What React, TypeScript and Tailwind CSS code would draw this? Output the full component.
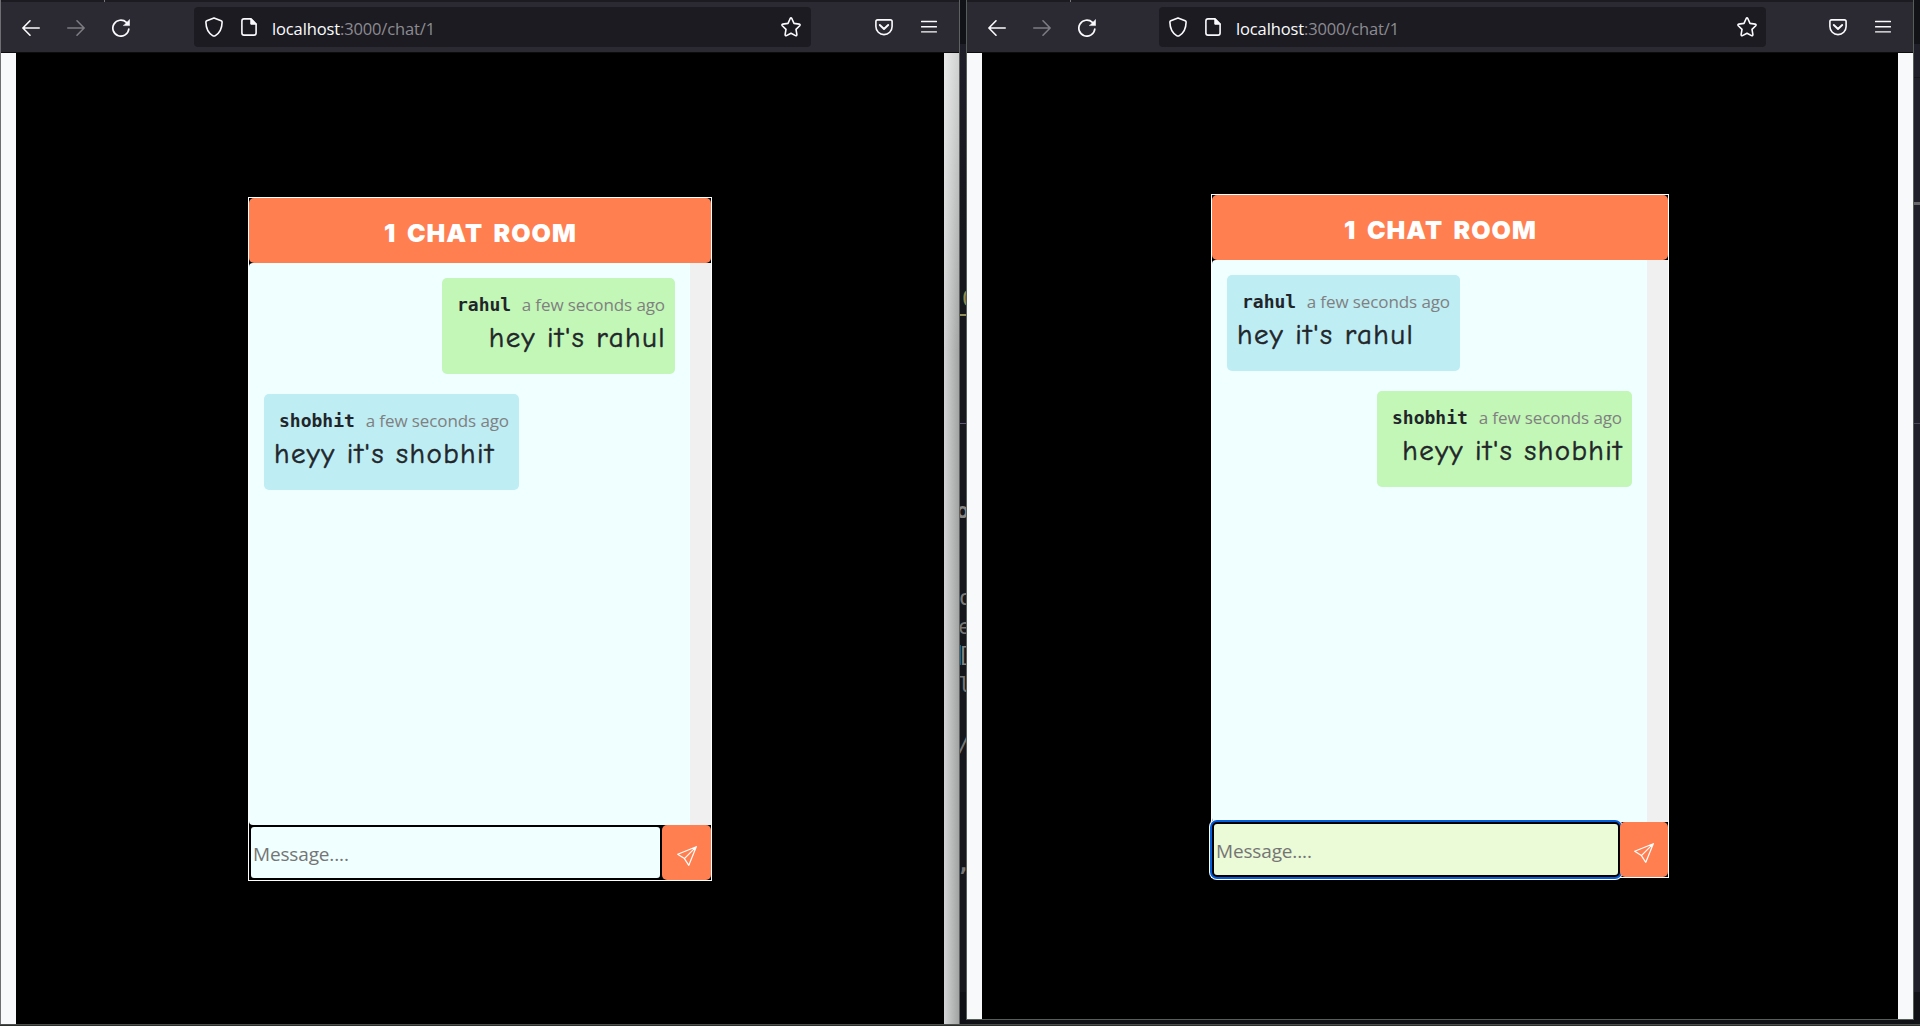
import React from "react";

type Message = { user: string; text: string; bubble: string };

const RAHUL: Message = { user: "rahul", text: "hey it's rahul", bubble: "w-[233px]" };
const SHOBHIT: Message = { user: "shobhit", text: "heyy it's shobhit", bubble: "w-[255px]" };

const svgProps = {
  fill: "none",
  stroke: "currentColor",
  strokeLinecap: "round" as const,
  strokeLinejoin: "round" as const,
};

function BackIcon() {
  return (
    <svg {...svgProps} width="18" height="18" viewBox="0 0 18 18" strokeWidth="1.6" className="shrink-0">
      <path d="M17.2 9H1M8 1.8L.9 9L8 16.2" />
    </svg>
  );
}

function ForwardIcon() {
  return (
    <svg {...svgProps} width="18" height="18" viewBox="0 0 18 18" strokeWidth="1.6" className="shrink-0">
      <path d="M.8 9H17M10 1.8L17.1 9L10 16.2" />
    </svg>
  );
}

function ReloadIcon() {
  return (
    <svg {...svgProps} width="18" height="18" viewBox="0 0 18 18" strokeWidth="1.7" className="shrink-0">
      <path d="M16.8 10A8 8 0 1 1 14.4 3.4" />
      <path d="M17.6 .8V6.6H11.6Z" fill="currentColor" strokeWidth=".5" />
    </svg>
  );
}

function ShieldIcon() {
  return (
    <svg {...svgProps} width="18" height="20" viewBox="0 0 18 20" strokeWidth="1.6" className="shrink-0">
      <path d="M9 .9L16.2 3.7Q17.2 4.1 17.1 5.2C17 10.6 15.4 15.4 10.4 18.6Q9 19.5 7.6 18.6C2.6 15.4 1 10.6 .9 5.2Q.8 4.1 1.8 3.7Z" />
    </svg>
  );
}

function PageIcon() {
  return (
    <svg {...svgProps} width="16" height="18" viewBox="0 0 16 18" strokeWidth="1.6" className="shrink-0">
      <path d="M10 .9H3Q.9 .9 .9 3V15Q.9 17.1 3 17.1H13Q15.1 17.1 15.1 15V6Z" />
      <path d="M9.8 1V6.2H15Z" fill="currentColor" strokeWidth="1" />
    </svg>
  );
}

function StarIcon() {
  return (
    <svg {...svgProps} width="20" height="20" viewBox="0 0 20 20" strokeWidth="1.6" className="shrink-0">
      <path d="M9.2 1.5Q10 .2 10.8 1.5L13 6.4L18.2 7.1Q19.7 7.5 18.7 8.7L15 12.4L15.9 17.6Q15.9 19.2 14.5 18.6L10 16.2L5.5 18.6Q4.1 19.2 4.1 17.6L5 12.4L1.3 8.7Q.3 7.5 1.8 7.1L7 6.4Z" />
    </svg>
  );
}

function PocketIcon() {
  return (
    <svg {...svgProps} width="18" height="17" viewBox="0 0 18 17" strokeWidth="1.6" className="shrink-0">
      <path d="M2.6 .9H15.4Q17.1 .9 17.1 2.6V7.5A8.1 8.1 0 0 1 .9 7.5V2.6Q.9 .9 2.6 .9Z" />
      <path d="M4.8 6L9 10L13.2 6" strokeWidth="1.9" />
    </svg>
  );
}

function MenuIcon() {
  return (
    <svg {...svgProps} width="16" height="14" viewBox="0 0 16 14" strokeWidth="1.4" className="shrink-0">
      <path d="M.6 1.5H15.4M.6 6.7H15.4M.6 11.9H15.4" />
    </svg>
  );
}

function SendIcon() {
  return (
    <svg {...svgProps} width="20" height="20" viewBox="0 0 20 20" strokeWidth="1.2">
      <path d="M19.3 .7L11.8 19.3L7.4 12.6L.7 8.2ZM19.3 .7L7.4 12.6" />
    </svg>
  );
}

function Toolbar({ urlClass, iconPad }: { urlClass: string; iconPad: string }) {
  return (
    <div className="flex h-[53px] shrink-0 flex-col bg-[#0c0c0d] text-[#fbfbfe]">
      <div className="flex h-[2px] bg-[#1c1b22]">
        <div className="ml-[103px] w-px bg-[#77767c]" />
      </div>
      <div className="flex h-[50px] items-center bg-[#2b2a33]">
        <div className="ml-[21px] flex gap-[27px] pt-px">
          <BackIcon />
          <span className="text-[#7d7c82]"><ForwardIcon /></span>
          <ReloadIcon />
        </div>
        <div className={`flex h-10 items-center rounded bg-[#1c1b22] ${urlClass} ${iconPad}`}>
          <ShieldIcon />
          <span className="ml-[18px]"><PageIcon /></span>
          <span className="ml-[14px] pt-[3px] pl-px font-['Open_Sans',sans-serif] text-[16.5px] leading-6 tracking-[-0.13px] whitespace-nowrap">
            localhost<span className="text-[#8c8b91]">:3000/chat/1</span>
          </span>
          <span className="ml-auto"><StarIcon /></span>
        </div>
        <div className="mr-[22px] ml-auto flex items-center gap-7">
          <PocketIcon />
          <MenuIcon />
        </div>
      </div>
    </div>
  );
}

function Bubble({ message, mine }: { message: Message; mine: boolean }) {
  return (
    <div
      className={`flex h-24 flex-col rounded-[5px] px-[10px] pt-3 whitespace-nowrap ${message.bubble} ${
        mine ? "items-end self-end bg-[#c3f7b7]" : "items-start self-start bg-[#beedf4]"
      }`}
    >
      <div className="flex h-[30px] w-full items-center justify-between pl-[5px]">
        <span className="font-['DejaVu_Sans_Mono',monospace] text-[18px] leading-[30px] font-bold">{message.user}</span>
        <span className="font-['Open_Sans',sans-serif] text-[17px] leading-[30px] tracking-[-0.1px] text-[#808080]">
          a few seconds ago
        </span>
      </div>
      <p className={`font-['Comic_Sans_MS','Comic_Neue','DejaVu_Sans',sans-serif] text-[29px] leading-9 tracking-[1.4px] text-[#212529] [-webkit-text-stroke:0.5px_#212529] ${mine ? "-mr-px" : ""}`}>
        {message.text}
      </p>
    </div>
  );
}

function ChatRoom({ me, focused, size }: { me: string; focused: boolean; size: string }) {
  return (
    <div className={`flex h-[684px] flex-col border border-white bg-black ${size}`}>
      <div className="flex h-[65px] shrink-0 items-center justify-center rounded-[5px] bg-[#ff7f50]">
        <h1 className="pt-[5px] pl-px font-['Inter',sans-serif] text-[25px] leading-8 font-black tracking-[1px] whitespace-nowrap text-white [word-spacing:4.5px]">
          1 CHAT ROOM
        </h1>
      </div>
      <div className="flex h-[562px] shrink-0">
        <div className="flex flex-1 flex-col gap-5 rounded-l-[4px] bg-[#f0ffff] p-[15px] text-[#212529]">
          <Bubble message={RAHUL} mine={me === "rahul"} />
          <Bubble message={SHOBHIT} mine={me === "shobhit"} />
        </div>
        <div className="w-[21px] bg-[#f0f0f0]" />
      </div>
      <div className="flex h-[55px]">
        <div
          className={`flex flex-1 items-center rounded-[5px] border-2 border-black pl-[2px] ${
            focused
              ? "bg-[#ebfad7] shadow-[0_0_0_2px_#0060df,0_0_0_3px_#ffffff]"
              : "bg-[#f0ffff]"
          }`}
        >
          <span className="pt-[3px] font-['Open_Sans',sans-serif] text-[19px] leading-8 tracking-[-0.15px] text-[#757575]">
            Message....
          </span>
        </div>
        <div className={`relative z-10 flex items-center justify-center rounded-[5px] bg-[#ff7f50] pt-[7px] text-white ${focused ? "w-12" : "w-[49px]"}`}>
          <SendIcon />
        </div>
      </div>
    </div>
  );
}

const EDITOR_MARKS = [
  { char: "0", place: "left-[2px] top-[285px] text-[#8d8d55]" },
  { char: "o", place: "left-[-4px] top-[497px] text-[#8a8886] font-bold" },
  { char: "o", place: "left-[-1px] top-[584px] text-[#7d7b79]" },
  { char: "e", place: "left-[-2px] top-[613px] text-[#777777]" },
  { char: "[", place: "left-[-3px] top-[641px] text-[#858585]" },
  { char: "l", place: "left-[-2px] top-[671px] text-[#777777]" },
  { char: "/", place: "left-[-3px] top-[731px] text-[#777777]" },
  { char: ",", place: "left-[-3px] top-[850px] text-[#777777] font-bold" },
];

function EditorGap() {
  return (
    <div className="relative h-[1024px] w-[6px] shrink-0 overflow-hidden bg-[#15171c] font-['DejaVu_Sans_Mono',monospace] text-[22px] leading-7">
      <div className="h-11 bg-[#111217]" />
      <div className="h-[190px] bg-linear-to-b from-[#1e1e29] to-[#15171c]" />
      <div className="absolute top-[314px] h-[2px] w-full bg-[#91905a]" />
      <div className="absolute top-[423px] h-px w-full bg-[#62577a]" />
      <div className="absolute top-[645px] left-0 h-5 w-px bg-[#126880]" />
      <div className="absolute top-[992px] h-8 w-full bg-[#101116]" />
      {EDITOR_MARKS.map((m) => (
        <span key={m.place} className={`absolute ${m.place}`}>{m.char}</span>
      ))}
    </div>
  );
}

export default function App() {
  return (
    <div className="flex h-[1026px] w-[1920px] flex-col overflow-hidden bg-[#111217]">
      <div className="flex h-[1024px] shrink-0">
        <section className="flex w-[960px] shrink-0 flex-col border-x border-l-[#6f6f73] border-r-[#5e625f]">
          <Toolbar urlClass="ml-[64px] w-[617px]" iconPad="pl-[11px] pr-[10px]" />
          <div className="flex flex-1">
            <div className="w-[15px] bg-[#f8f9fb]" />
            <div className="flex flex-1 justify-center bg-black pt-[144px]">
              <ChatRoom me="rahul" focused={false} size="w-[464px]" />
            </div>
            <div className="flex w-[15px] flex-col bg-linear-to-r from-[#d4d5d6] to-[#a2a4a3]">
              <div className="h-[300px] bg-linear-to-b from-white/50 to-transparent" />
            </div>
          </div>
        </section>
        <EditorGap />
        <section className="flex h-[1020px] w-[948px] shrink-0 flex-col border-x border-b border-[#565e58]">
          <Toolbar urlClass="ml-[63px] w-[607px]" iconPad="pl-[10px] pr-[9px]" />
          <div className="flex flex-1">
            <div className="w-[15px] bg-[#f8f9fb]" />
            <div className="flex flex-1 justify-center bg-black pt-[141px]">
              <ChatRoom me="shobhit" focused size="w-[458px]" />
            </div>
            <div className="w-[15px] bg-[#f8f9fb]" />
          </div>
        </section>
        <div className="flex w-[6px] flex-col bg-[#1e1f29]">
          <div className="h-11 bg-[#121317]" />
          <div className="mt-[33px] h-px bg-[#15151b]" />
          <div className="mt-[124px] h-[3px] bg-[#68686b]" />
          <div className="mt-[218px] h-px bg-[#4a4658]" />
          <div className="mt-auto h-8 bg-[#121317]" />
        </div>
      </div>
      <div className="h-px bg-[#4b4e4b]" />
      <div className="h-px bg-[#2d2f2e]" />
    </div>
  );
}
